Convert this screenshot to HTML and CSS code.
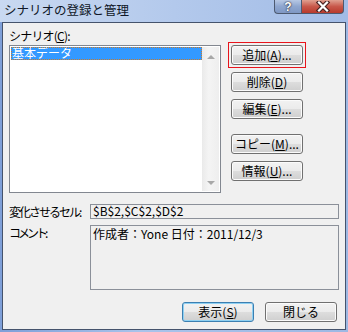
FILE: index.html
```html
<!DOCTYPE html>
<html lang="ja">
<head>
    <meta charset="UTF-8">
    <title>シナリオの登録と管理</title>
    <link rel="stylesheet" href="styles.css">
</head>
<body>
    <div class="window">
        <div class="titlebar">
            <span class="title">シナリオの登録と管理</span>
            <div class="caption-btns">
                <span class="cap cap-help">?</span>
                <span class="cap cap-close">
                    <svg width="16" height="11" viewBox="0 0 16 11">
                        <path d="M4 1.5 L12 9.5 M12 1.5 L4 9.5" stroke="#4a2424" stroke-width="4.5" stroke-linecap="square"/>
                        <path d="M4 1.5 L12 9.5 M12 1.5 L4 9.5" stroke="#fff" stroke-width="2.2" stroke-linecap="square"/>
                    </svg>
                </span>
            </div>
        </div>

        <div class="client">
            <div class="label">シナリオ(<u>C</u>):</div>

            <div class="top-row">
                <div class="listbox">
                    <div class="items">
                        <div class="item selected">基本データ</div>
                    </div>
                    <div class="scrollbar">
                        <span class="arrow arrow-up"></span>
                        <span class="arrow arrow-down"></span>
                    </div>
                </div>

                <div class="side-buttons">
                    <div class="marker">
                        <button class="btn">追加(<u>A</u>)...</button>
                    </div>
                    <button class="btn">削除(<u>D</u>)</button>
                    <button class="btn">編集(<u>E</u>)...</button>
                    <button class="btn btn-spaced">コピー(<u>M</u>)...</button>
                    <button class="btn">情報(<u>U</u>)...</button>
                </div>
            </div>

            <div class="fields">
                <div class="field-label">変化させるセル:</div>
                <div class="textbox">$B$2,$C$2,$D$2</div>
                <div class="field-label field-label-narrow">コメント:</div>
                <div class="textbox textbox-tall">作成者：Yone 日付：2011/12/3</div>
            </div>

            <div class="footer">
                <button class="btn btn-default">表示(<u>S</u>)</button>
                <button class="btn">閉じる</button>
            </div>
        </div>
    </div>
</body>
</html>
```

FILE: styles.css
```css
* {
    margin: 0;
    padding: 0;
    box-sizing: border-box;
}

body {
    font-family: "Noto Sans CJK JP", "Liberation Sans", sans-serif;
    font-size: 12px;
    color: #000;
    background: #fff;
}

.window {
    width: 348px;
    height: 332px;
    display: flex;
    flex-direction: column;
    background: linear-gradient(to right, #7e9fd8, #a9c3ea 40%, #9db8e3);
    padding: 0 2px 2px 2px;
}

.titlebar {
    height: 22px;
    flex-shrink: 0;
    display: flex;
    justify-content: space-between;
    align-items: flex-start;
    background: linear-gradient(to right, #c9d9f1, #b3c9ec 50%, #a2bce6);
    margin: 0 -2px;
    padding-left: 4px;
}

.title {
    line-height: 19px;
    font-size: 12.5px;
    color: #101828;
}

.caption-btns {
    display: flex;
    margin-right: 4px;
}

.cap {
    height: 14px;
    display: flex;
    align-items: center;
    justify-content: center;
    border: 1px solid #4d5a70;
    border-top: none;
    color: #fff;
    font-family: "Liberation Sans", sans-serif;
    font-weight: bold;
    font-size: 12px;
    line-height: 12px;
}

.cap-help {
    width: 27px;
    border-radius: 0 0 0 4px;
    border-right: none;
    background: linear-gradient(#b7c8e4, #8ea6cf 50%, #7f98c4);
    text-shadow: 0 0 2px #223, 0 0 1px #223;
}

.cap-close {
    width: 43px;
    border-radius: 0 0 4px 0;
    background: linear-gradient(#e0a090, #c8584a 50%, #b83a2c);
}

.client {
    flex: 1;
    display: flex;
    flex-direction: column;
    background: #f0f0f0;
    border: 1px solid #45536c;
    padding: 5px 6px 0 6px;
}

.label {
    line-height: 15px;
    margin-bottom: 2px;
    letter-spacing: -0.8px;
}

u {
    text-decoration: underline;
    text-underline-offset: 1px;
}

.top-row {
    display: flex;
    gap: 10px;
}

.listbox {
    width: 212px;
    height: 148px;
    border: 1px solid #828790;
    background: #fff;
    display: flex;
    padding: 1px;
}

.items {
    flex: 1;
}

.item {
    height: 13px;
    line-height: 12px;
    padding-left: 1px;
}

.item.selected {
    background: #3399ff;
    color: #fff;
    outline: 1px dotted #c87a2a;
    outline-offset: -1px;
}

.scrollbar {
    width: 17px;
    display: flex;
    flex-direction: column;
    justify-content: space-between;
    align-items: center;
    padding: 8px 0 6px 0;
    background: linear-gradient(to right, #eaeaea, #f4f4f4 40%, #eeeeee);
}

.arrow {
    width: 0;
    height: 0;
    border-left: 4px solid transparent;
    border-right: 4px solid transparent;
}

.arrow-up {
    border-bottom: 4px solid #a8a8a8;
}

.arrow-down {
    border-top: 4px solid #a8a8a8;
}

.side-buttons {
    display: flex;
    flex-direction: column;
    gap: 7px;
}

/* red annotation box around the add button */
.marker {
    border: 1px solid #e8141c;
    padding: 2px;
    margin: -3px;
    margin-bottom: -3px;
}

.marker .btn {
    display: block;
}

.btn {
    width: 72px;
    height: 20px;
    flex-shrink: 0;
    font-family: inherit;
    font-size: 12px;
    line-height: 16px;
    color: #000;
    border: 1px solid #707070;
    border-radius: 3px;
    background: linear-gradient(#f2f2f2 0%, #ebebeb 50%, #dddddd 51%, #cfcfcf 100%);
    box-shadow: inset 0 0 0 1px #fbfbfb;
}

.btn-spaced {
    margin-top: 8px;
}

.btn-default {
    border-color: #3c7fb1;
    box-shadow: inset 0 0 0 1px #8ed0f2;
}

.fields {
    display: grid;
    grid-template-columns: 81px 249px;
    row-gap: 6px;
    margin-top: 11px;
}

.field-label {
    line-height: 15px;
    white-space: nowrap;
    letter-spacing: -2px;
}

.field-label-narrow {
    letter-spacing: -3px;
}

.textbox {
    height: 15px;
    border: 1px solid #8b9099;
    line-height: 12px;
    padding-left: 2px;
}

.textbox-tall {
    height: 65px;
    padding-top: 2px;
}

.footer {
    display: flex;
    justify-content: flex-end;
    gap: 11px;
    margin-top: 12px;
    padding-right: 2px;
}
```
